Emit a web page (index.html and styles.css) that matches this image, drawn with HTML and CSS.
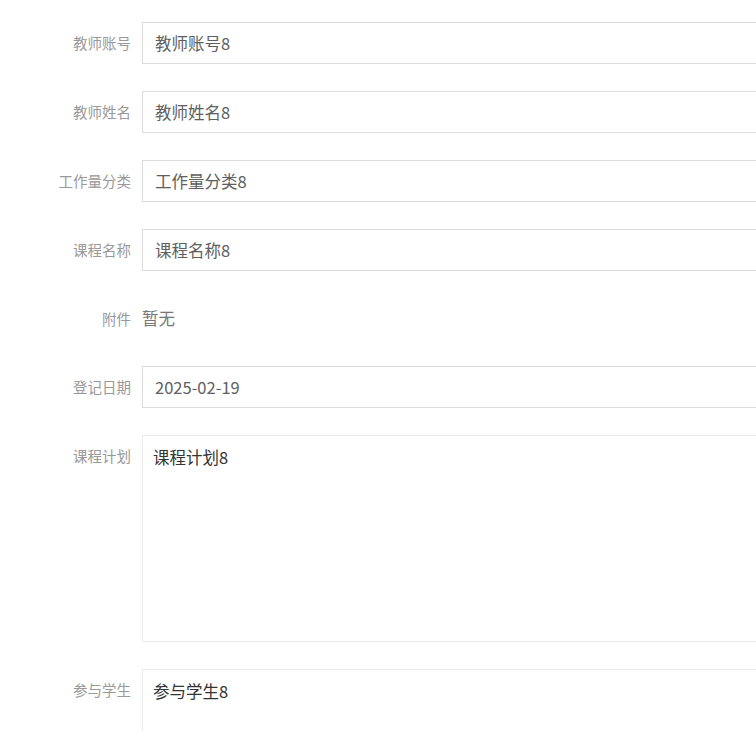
FILE: index.html
```html
<!DOCTYPE html>
<html lang="zh">
<head>
<meta charset="utf-8">
<title>教师工作量</title>
<link rel="stylesheet" href="styles.css">
</head>
<body>
<form class="form">
  <div class="item">
    <label class="label">教师账号</label>
    <input class="input" type="text" value="教师账号8" readonly>
  </div>
  <div class="item">
    <label class="label">教师姓名</label>
    <input class="input" type="text" value="教师姓名8" readonly>
  </div>
  <div class="item">
    <label class="label">工作量分类</label>
    <input class="input" type="text" value="工作量分类8" readonly>
  </div>
  <div class="item">
    <label class="label">课程名称</label>
    <input class="input" type="text" value="课程名称8" readonly>
  </div>
  <div class="item">
    <label class="label">附件</label>
    <span class="plain">暂无</span>
  </div>
  <div class="item">
    <label class="label">登记日期</label>
    <input class="input" type="text" value="2025-02-19" readonly>
  </div>
  <div class="item">
    <label class="label">课程计划</label>
    <textarea class="textarea" readonly>课程计划8</textarea>
  </div>
  <div class="item">
    <label class="label">参与学生</label>
    <textarea class="textarea" readonly>参与学生8</textarea>
  </div>
</form>
</body>
</html>
```
FILE: styles.css
```css
html, body {
  margin: 0;
  padding: 0;
  background: #fff;
  overflow: hidden;
}
body {
  font-family: "Noto Sans CJK SC", "Noto Sans", sans-serif;
}
.form {
  padding-top: 22px;
  width: 900px;
}
.item {
  display: flex;
  align-items: flex-start;
  margin-bottom: 27px;
}
.label {
  width: 131px;
  flex: none;
  box-sizing: border-box;
  text-align: right;
  margin-right: 11px;
  font-size: 14.5px;
  line-height: 41px;
  color: #999;
}
.input {
  width: 660px;
  height: 42px;
  box-sizing: border-box;
  border: 1px solid #dcdcdc;
  border-radius: 0;
  padding: 0 12px;
  margin: 0;
  font-family: inherit;
  font-size: 16.5px;
  color: #606060;
  background: #fff;
  outline: none;
}
.plain {
  font-size: 16.5px;
  line-height: 40px;
  color: #777;
}
.textarea {
  width: 660px;
  height: 207px;
  box-sizing: border-box;
  border: 1px solid #ececec;
  border-radius: 0;
  padding: 9px 10px;
  margin: 0;
  font-family: inherit;
  font-size: 16.5px;
  line-height: 24px;
  color: #333;
  background: #fff;
  resize: none;
  outline: none;
}
.item:last-child {
  margin-bottom: 0;
}
```
